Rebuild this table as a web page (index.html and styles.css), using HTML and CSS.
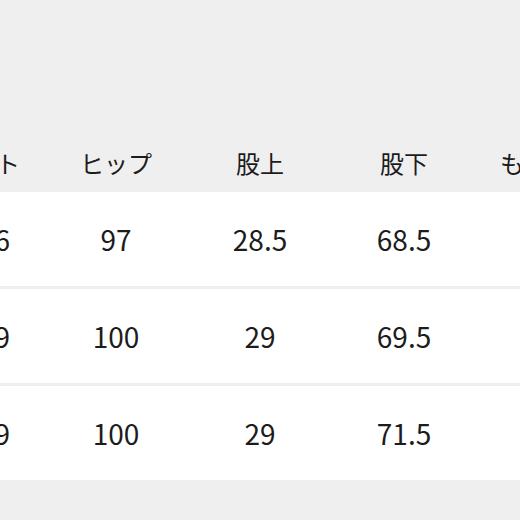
FILE: index.html
```html
<!DOCTYPE html>
<html lang="ja">
<head>
<meta charset="utf-8">
<link rel="stylesheet" href="styles.css">
</head>
<body>
<div class="sheet">
  <div class="row head">
    <div class="cell first">ウエスト</div>
    <div class="cell">ヒップ</div>
    <div class="cell">股上</div>
    <div class="cell">股下</div>
    <div class="cell">もも周り</div>
  </div>
  <div class="rows">
    <div class="row data">
      <div class="cell first">66</div>
      <div class="cell">97</div>
      <div class="cell">28.5</div>
      <div class="cell">68.5</div>
      <div class="cell">58</div>
    </div>
    <div class="row data">
      <div class="cell first">69</div>
      <div class="cell">100</div>
      <div class="cell">29</div>
      <div class="cell">69.5</div>
      <div class="cell">60</div>
    </div>
    <div class="row data">
      <div class="cell first">69</div>
      <div class="cell">100</div>
      <div class="cell">29</div>
      <div class="cell">71.5</div>
      <div class="cell">60</div>
    </div>
  </div>
</div>
</body>
</html>
```
FILE: styles.css
```css
html, body {
  margin: 0;
  padding: 0;
  overflow: hidden;
  background: #efefef;
}
body {
  width: 520px;
  height: 520px;
  font-family: "Noto Sans CJK JP", "Noto Sans", sans-serif;
  color: #1c1c1c;
}
.sheet {
  margin-left: -100px;
  width: 720px;
}
.row {
  display: grid;
  grid-template-columns: repeat(5, 144px);
  align-items: center;
}
.cell {
  text-align: center;
  white-space: nowrap;
  line-height: 1;
}
.head {
  padding-top: 134px;
  height: 58px;
  font-size: 24px;
}
.head .first {
  text-align: right;
  padding-right: 24px;
}
.rows {
  display: flex;
  flex-direction: column;
  gap: 3px;
}
.data {
  height: 94px;
  background: #ffffff;
  font-size: 28px;
}
.data .first {
  text-align: right;
  padding-right: 34px;
}
```
